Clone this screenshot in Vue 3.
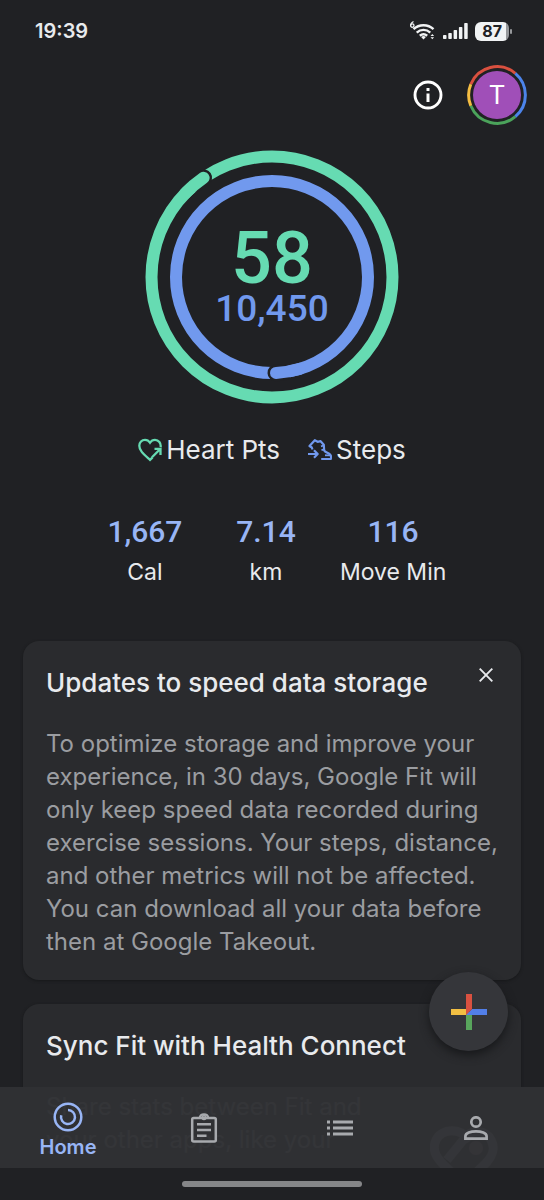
<script setup>
import { ref } from 'vue'

const showUpdate = ref(true)
const stats = [
  { value: '1,667', label: 'Cal' },
  { value: '7.14', label: 'km' },
  { value: '116', label: 'Move Min' },
]
</script>

<template>
  <div class="app">
    <div class="status">
      <time>19:39</time>
      <div class="status-icons">
        <svg width="27" height="22" viewBox="0 0 27 22" aria-hidden="true">
          <g fill="none" stroke="#f1f3f4" stroke-width="2.4">
            <path d="M4.5 9.200C10 4 19 4 24.500 9.200" />
            <path d="M7.700 12.600C11.700 9 17.300 9 21.300 12.600" />
            <path d="M10.800 15.700C13 13.900 16 13.900 18.200 15.700" />
          </g>
          <path d="M14.500 19.500l-2.400-2.500q2.400-1.800 4.800 0z" fill="#f1f3f4" />
          <path d="M4.500 1.500C2.500 2.500 1.600 4 1.600 5.400" fill="none" stroke="#f1f3f4" stroke-width="1.300" />
          <circle cx="3.300" cy="5.600" r="1.700" fill="none" stroke="#f1f3f4" stroke-width="1.300" />
          <path d="M21.500 16l1.800-2 1.800 2zM21.500 17.300l1.800 2 1.800-2z" fill="#f1f3f4" />
        </svg>
        <svg width="25" height="16" viewBox="0 0 25 16" fill="#f1f3f4" aria-hidden="true">
          <rect x="0" y="12" width="3.500" height="4" rx=".8" />
          <rect x="5.300" y="10" width="3.500" height="6" rx=".8" />
          <rect x="10.600" y="7" width="3.500" height="9" rx=".8" />
          <rect x="15.900" y="4" width="3.500" height="12" rx=".8" />
          <rect x="21.200" y="0" width="3.500" height="16" rx=".8" />
        </svg>
        <span class="battery">87</span>
      </div>
    </div>

    <header class="top">
      <button class="plain" aria-label="Information">
        <svg width="30" height="30" viewBox="0 0 30 30">
          <circle cx="15" cy="15" r="13" fill="none" stroke="#fff" stroke-width="2.900" />
          <path d="M13.500 13.500h3v8.500h-3zM13.500 8h3v3h-3z" fill="#fff" />
        </svg>
      </button>
      <button class="plain avatar" aria-label="Account">
        <svg class="halo" viewBox="0 0 60 60" fill="none" stroke-width="3" aria-hidden="true">
          <path d="M3.800 19.200A28.400 28.400 0 0 1 48.300 8.300" stroke="#d9503f" />
          <path d="M48.300 8.300A28.400 28.400 0 0 1 48.300 51.700" stroke="#4c84ea" />
          <path d="M48.300 51.700A28.400 28.400 0 0 1 3.800 40.800" stroke="#4ba35b" />
          <path d="M3.800 40.800A28.400 28.400 0 0 1 3.800 19.200" stroke="#f4bd42" />
        </svg>
        <span class="letter">T</span>
      </button>
    </header>

    <main>
      <section class="rings" aria-label="Daily goals">
        <svg viewBox="0 0 254 254" fill="none" stroke-width="12" aria-hidden="true">
          <circle cx="127" cy="127" r="120.500" stroke="#66dbb2" />
          <path d="M51.200 33.300A120.500 120.500 0 0 1 58.600 27.800" stroke="#202124" stroke-width="17" stroke-linecap="round" />
          <path d="M40 43.600A120.500 120.500 0 0 1 58.600 27.800" stroke="#66dbb2" stroke-linecap="round" />
          <circle cx="127" cy="127" r="96" stroke="#7199ee" />
          <path d="M138 222.400A96 96 0 0 1 131 222.900" stroke="#202124" stroke-width="17" stroke-linecap="round" />
          <path d="M155 218.800A96 96 0 0 1 131 222.900" stroke="#7199ee" stroke-linecap="round" />
        </svg>
        <div class="totals">
          <strong class="points">58</strong>
          <span class="steps">10,450</span>
        </div>
      </section>

      <div class="legend">
        <div>
          <svg width="24" height="24" viewBox="0 0 24 24" fill="none" stroke="#66dbb2" stroke-width="2.300" aria-hidden="true">
            <path d="M22.600 9.300C23.300 5 20.500 1.800 17 1.800c-2.200 0-3.900 1.200-5 2.900C10.900 3 9.200 1.800 7 1.800 3.900 1.800 1.300 4.300 1.300 7.700c0 5 4.200 8.300 10.700 14.200l2.600-2.500" />
            <path d="M14 19.300l8-8M16.500 10.900h6v6" />
          </svg>
          <span>Heart Pts</span>
        </div>
        <div>
          <svg width="24" height="24" viewBox="0 0 24 24" fill="none" stroke="#7199ee" stroke-width="2.200" stroke-linejoin="round" aria-hidden="true">
            <path d="M4.500 11.500L3.800 9.500 1.500 8 6.800 2.200l2.800 1.600 3-.6 3.200 3.600.4 5.700c1 2 5 2.600 6.300 4.600.8 1.300.7 2.700.2 3.900H13.200" />
            <path d="M0 16h9M6 12.300l3.700 3.700L6 19.700" />
            <path d="M15.500 7.500l-2.500.8M16 11.300l-2.500.8" stroke-width="1.800" />
            <path d="M17 17.300h5" stroke-width="1.800" />
          </svg>
          <span>Steps</span>
        </div>
      </div>

      <dl class="stats">
        <div v-for="s in stats" :key="s.label">
          <dt>{{ s.label }}</dt>
          <dd>{{ s.value }}</dd>
        </div>
      </dl>

      <div class="cards">
        <article v-if="showUpdate" class="card">
          <div class="card-head">
            <h2>Updates to speed data storage</h2>
            <button class="plain close" aria-label="Dismiss" @click="showUpdate = false">
              <svg width="14" height="14" viewBox="0 0 14 14" stroke="#e8eaed" stroke-width="1.900">
                <path d="M.7.7l12.600 12.600M13.300.7L.7 13.300" />
              </svg>
            </button>
          </div>
          <p>To optimize storage and improve your experience, in 30 days, Google Fit will only keep speed data recorded during exercise sessions. Your steps, distance, and other metrics will not be affected. You can download all your data before then at Google Takeout.</p>
        </article>
        <article class="card">
          <h2>Sync Fit with Health Connect</h2>
          <div class="sync">
            <p>Share stats between Fit and your other apps, like your</p>
            <svg width="68" height="68" viewBox="0 0 68 68" fill="none" stroke="#a0a1a5" stroke-width="9" aria-hidden="true">
              <path d="M40 15C31 1 12 2 6 14c-5 11 1 19 12 29l16 15 18-17c11-10 14-18 9-27C56 4 42 2 34 13L17 34" />
              <circle cx="46" cy="22" r="7" fill="#a07880" stroke="none" />
            </svg>
          </div>
        </article>
      </div>
    </main>

    <div class="dock">
      <button class="plain fab" aria-label="Add">
        <svg width="36" height="36" viewBox="0 0 36 36" aria-hidden="true">
          <path d="M0 15h18l-3 6H0z" fill="#f2bf43" />
          <path d="M15 18l6 0v18h-6z" fill="#58a55c" />
          <path d="M15 21l6-6h15v6z" fill="#527fe8" />
          <path d="M15 0h6v15l-6 6z" fill="#d95140" />
        </svg>
      </button>
      <nav>
        <a href="#home" class="active" aria-current="page">
          <svg width="30" height="30" viewBox="0 0 30 30" fill="none" stroke="#98b5f5" stroke-width="2.500" aria-hidden="true">
            <circle cx="15" cy="15" r="13.300" />
            <path d="M15 8a7 7 0 1 1-6.800 5.300" />
          </svg>
          <span>Home</span>
        </a>
        <a href="#journal" aria-label="Journal">
          <svg width="28" height="30" viewBox="0 0 28 30" fill="none" stroke="#a8aaae" stroke-width="2.500" aria-hidden="true">
            <rect x="2.200" y="5" width="23.600" height="23.600" rx="1.500" />
            <path d="M7 11.200h14M7 17h14M7 22.800h9.500" />
            <path d="M9.500 5A4.600 4.600 0 0 1 18.500 5" stroke-width="2" />
            <circle cx="14" cy="4.500" r="1.800" stroke-width="1.800" />
          </svg>
        </a>
        <a href="#browse" aria-label="Browse">
          <svg width="26" height="16" viewBox="0 0 26 16" fill="#a8aaae" aria-hidden="true">
            <path d="M6 .5h20v3H6zM6 6.500h20v3H6zM6 12.500h20v3H6z" />
            <path d="M0 .5h3v3H0zM0 6.500h3v3H0zM0 12.500h3v3H0z" />
          </svg>
        </a>
        <a href="#profile" aria-label="Profile">
          <svg width="24" height="24" viewBox="0 0 24 24" fill="none" stroke="#a8aaae" stroke-width="2.700" aria-hidden="true">
            <circle cx="12" cy="6" r="4.700" />
            <path d="M1.400 22.600v-2.300c0-3.200 5.500-5 10.600-5s10.600 1.800 10.600 5v2.300z" />
          </svg>
        </a>
      </nav>
      <div class="gesture"><span></span></div>
    </div>
  </div>
</template>

<style>
body {
  margin: 0;
  background: #202124;
}
</style>

<style scoped>
* {
  box-sizing: border-box;
}
.app {
  position: relative;
  display: flex;
  flex-direction: column;
  height: 100vh;
  overflow: hidden;
  background: #202124;
  color: #e8eaed;
  font-family: Inter, sans-serif;
}
svg {
  display: block;
}
.plain {
  display: grid;
  place-items: center;
  padding: 0;
  border: 0;
  background: none;
  color: inherit;
  font: inherit;
  cursor: pointer;
}
.status {
  display: flex;
  justify-content: space-between;
  align-items: center;
  flex: none;
  height: 62px;
  padding: 0 35px;
}
.status time {
  font-size: 20px;
  font-weight: 600;
}
.status-icons {
  display: flex;
  align-items: center;
  gap: 7px;
}
.battery {
  position: relative;
  padding: 0 7px;
  border-radius: 6px;
  background: linear-gradient(90deg, #f1f3f4 90%, #96989b 90%);
  color: #202124;
  font-size: 16px;
  font-weight: 700;
  line-height: 19px;
}
.battery::after {
  content: '';
  position: absolute;
  top: 7px;
  right: -3px;
  width: 2px;
  height: 5px;
  border-radius: 1px;
  background: #96989b;
}
.top {
  display: flex;
  justify-content: flex-end;
  align-items: center;
  flex: none;
  gap: 24px;
  height: 66px;
  padding: 0 17px;
}
.avatar {
  width: 60px;
  height: 60px;
}
.avatar > * {
  grid-area: 1 / 1;
}
.halo {
  width: 60px;
}
.letter {
  width: 48px;
  height: 48px;
  border-radius: 50%;
  background: #a04fb8;
  color: #fff;
  font: 400 26px/48px Roboto, sans-serif;
}
main {
  flex: 1;
  min-height: 0;
  overflow-y: auto;
  scrollbar-width: none;
}
.rings {
  display: grid;
  place-items: center;
  width: 254px;
  margin: 22px auto 0;
}
.rings > * {
  grid-area: 1 / 1;
}
.rings svg {
  width: 100%;
}
.totals {
  display: flex;
  flex-direction: column;
  align-items: center;
  font-family: Roboto, sans-serif;
  font-weight: 500;
}
.points {
  color: #66dbb2;
  font-size: 72px;
  font-weight: 500;
  line-height: 64px;
}
.steps {
  color: #7199ee;
  font-size: 37px;
  line-height: 36px;
}
.legend {
  display: flex;
  justify-content: center;
  gap: 28px;
  margin-top: 28px;
  font-size: 26px;
  line-height: 36px;
}
.legend div {
  display: flex;
  align-items: center;
  gap: 4px;
}
.stats {
  display: grid;
  grid-template-columns: 121fr 121fr 133fr;
  width: 69%;
  margin: 42px auto 0;
  text-align: center;
}
.stats div {
  display: flex;
  flex-direction: column-reverse;
}
.stats dt {
  font-size: 23px;
  line-height: 36px;
  white-space: nowrap;
}
.stats dd {
  margin: 0;
  color: #98b5f5;
  font: 500 30px/44px Roboto, sans-serif;
}
.cards {
  display: grid;
  gap: 24px;
  padding: 51px 23px 0;
}
.card {
  padding: 24px 20px 22px 23px;
  border-radius: 16px;
  background: #2a2b2e;
  box-shadow: 0 1px 3px #17181a;
}
.card-head {
  display: flex;
  justify-content: space-between;
  align-items: flex-start;
}
.close {
  width: 30px;
  height: 20px;
}
h2 {
  margin: 0;
  font-size: 26px;
  font-weight: 500;
  line-height: 36px;
}
p {
  margin: 26px 0 0;
  color: #9b9da1;
  font-size: 24px;
  line-height: 33px;
}
.sync {
  display: flex;
  justify-content: space-between;
}
.sync p {
  width: 340px;
}
.sync svg {
  margin: 62px 3px 0 0;
}
.dock {
  position: absolute;
  inset: auto 0 0;
}
.fab {
  position: absolute;
  right: 36px;
  bottom: 149px;
  width: 79px;
  height: 79px;
  border-radius: 50%;
  background: #35363a;
  box-shadow: 0 4px 10px #17181a;
}
nav {
  display: grid;
  grid-template-columns: repeat(4, 1fr);
  height: 81px;
  background: rgb(48 49 52 / 96%);
}
nav a {
  display: flex;
  flex-direction: column;
  align-items: center;
  justify-content: center;
  color: #98b5f5;
  font-size: 20px;
  font-weight: 600;
  line-height: 30px;
  text-decoration: none;
}
nav .active {
  padding-top: 8px;
}
.gesture {
  display: grid;
  place-items: center;
  height: 32px;
  background: #202124;
}
.gesture span {
  width: 33%;
  height: 6px;
  border-radius: 3px;
  background: #858688;
}
</style>
